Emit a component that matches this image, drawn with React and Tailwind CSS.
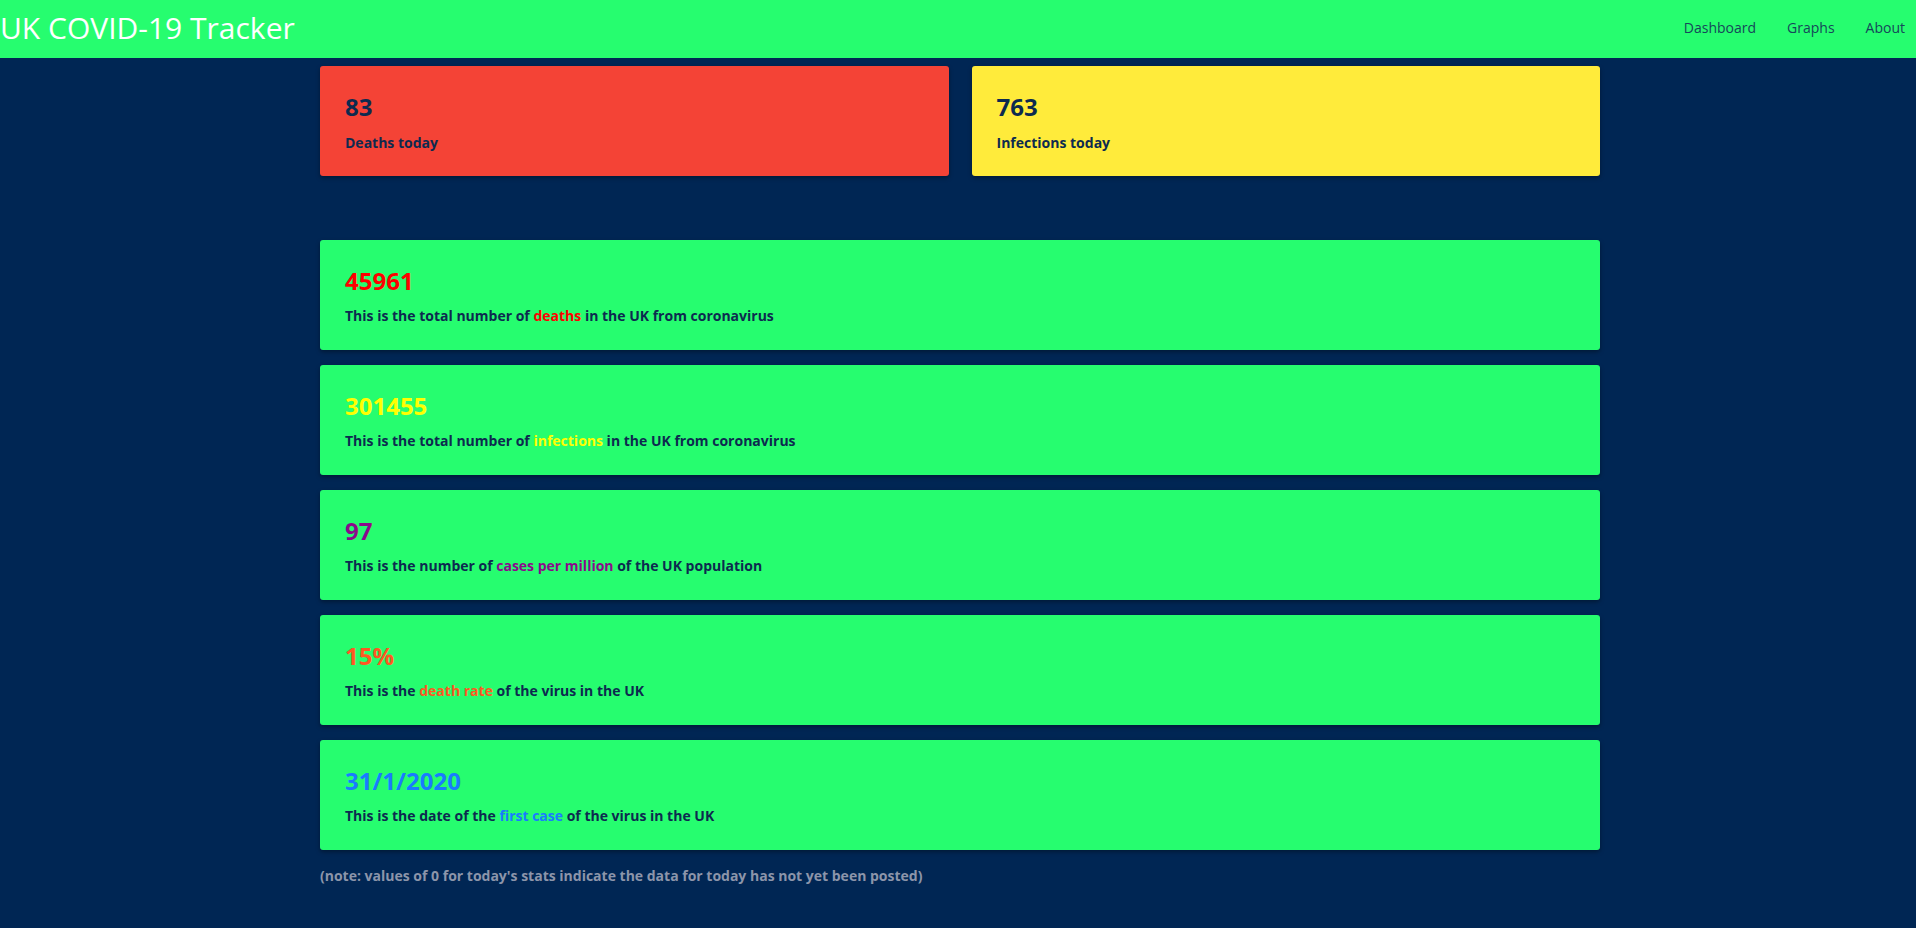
const stats = [
  {
    value: "45961",
    color: "text-[#ff0000]",
    before: "This is the total number of ",
    word: "deaths",
    after: " in the UK from coronavirus",
  },
  {
    value: "301455",
    color: "text-[#ffff00]",
    before: "This is the total number of ",
    word: "infections",
    after: " in the UK from coronavirus",
  },
  {
    value: "97",
    color: "text-[#8b0a8b]",
    before: "This is the number of ",
    word: "cases per million",
    after: " of the UK population",
  },
  {
    value: "15%",
    color: "text-[#ff5722]",
    before: "This is the ",
    word: "death rate",
    after: " of the virus in the UK",
  },
  {
    value: "31/1/2020",
    color: "text-[#1a7bff]",
    before: "This is the date of the ",
    word: "first case",
    after: " of the virus in the UK",
  },
];

const Card = ({ bg, children }) => (
  <div
    className={`${bg} h-[110px] rounded-[3px] px-[25px] pt-[25px] shadow-[0_2px_4px_rgba(0,0,0,0.35)]`}
  >
    {children}
  </div>
);

const App = () => {
  return (
    <div className="min-h-[928px] bg-[#002654] font-['Open_Sans',sans-serif] text-[#0d2a4f]">
      <nav className="h-[58px] bg-[#26fd6f] flex items-center justify-between">
        <a className="text-[30px] leading-[40px] text-white font-normal -mt-[2px]">
          UK COVID-19 Tracker
        </a>
        <ul className="flex gap-[31px] pr-[11px] text-[14px] text-[#16475a] -mt-[3px]">
          <li>Dashboard</li>
          <li>Graphs</li>
          <li>About</li>
        </ul>
      </nav>

      <main className="w-[1280px] ml-[320px] pt-[8px]">
        <div className="grid grid-cols-2 gap-[23px]">
          <Card bg="bg-[#f44336]">
            <h3 className="text-[24px] leading-[32px] font-bold">83</h3>
            <p className="mt-[10px] text-[14px] leading-[20px] font-bold">Deaths today</p>
          </Card>
          <Card bg="bg-[#ffeb3b]">
            <h3 className="text-[24px] leading-[32px] font-bold">763</h3>
            <p className="mt-[10px] text-[14px] leading-[20px] font-bold">Infections today</p>
          </Card>
        </div>

        <div className="mt-[64px] flex flex-col gap-[15px]">
          {stats.map((s) => (
            <Card key={s.value} bg="bg-[#26fd6f]">
              <h3 className={`text-[24px] leading-[32px] font-bold ${s.color}`}>{s.value}</h3>
              <p className="mt-[9px] text-[14px] leading-[20px] font-bold">
                {s.before}
                <span className={s.color}>{s.word}</span>
                {s.after}
              </p>
            </Card>
          ))}
        </div>

        <p className="mt-[16px] text-[14px] leading-[20px] font-bold text-[#8c95aa]">
          (note: values of 0 for today's stats indicate the data for today has not yet been posted)
        </p>
      </main>
    </div>
  );
};

export default App;
